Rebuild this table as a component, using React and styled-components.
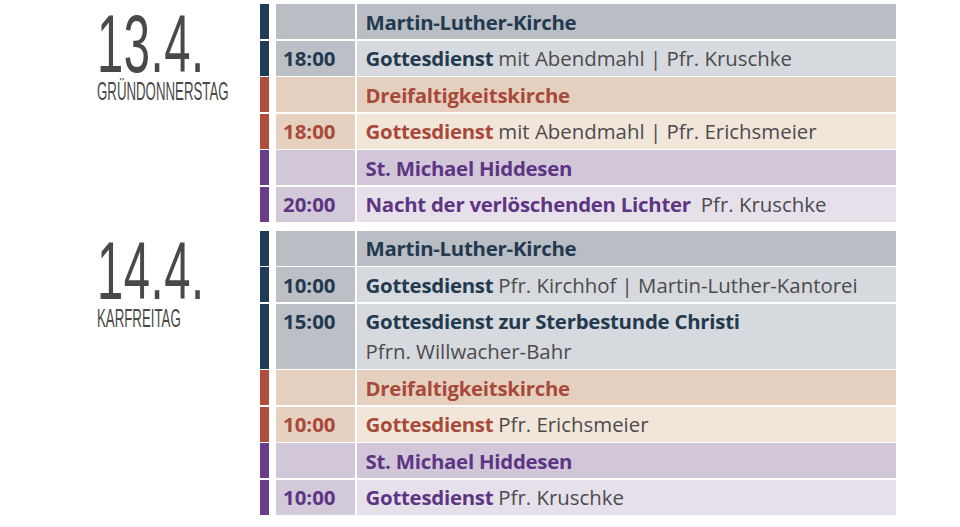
import React from "react";
import styled, { createGlobalStyle } from "styled-components";

const GlobalStyle = createGlobalStyle`
  html, body { margin: 0; padding: 0; background: #ffffff; }
  body { font-family: "Open Sans", "Lato", sans-serif; }
`;

const themes = {
  navy: { bar: "#1f3b56", text: "#22394f", head: "#b9bdc4", time: "#bcc0c6", body: "#d6d9dd" },
  red: { bar: "#ae4e3b", text: "#a8493a", head: "#e5d0c0", time: "#e6d0bf", body: "#f2e6db" },
  purple: { bar: "#6a3d89", text: "#5e3583", head: "#d1c7d9", time: "#d2c9d9", body: "#e6e0ea" },
};

const days = [
  {
    date: "13.4.",
    label: "GRÜNDONNERSTAG",
    groups: [
      { church: "Martin-Luther-Kirche", theme: "navy", events: [{ time: "18:00", title: "Gottesdienst", rest: "mit Abendmahl | Pfr. Kruschke" }] },
      { church: "Dreifaltigkeitskirche", theme: "red", events: [{ time: "18:00", title: "Gottesdienst", rest: "mit Abendmahl | Pfr. Erichsmeier" }] },
      { church: "St. Michael Hiddesen", theme: "purple", events: [{ time: "20:00", title: "Nacht der verlöschenden Lichter", rest: "Pfr. Kruschke", wide: true }] },
    ],
  },
  {
    date: "14.4.",
    label: "KARFREITAG",
    groups: [
      {
        church: "Martin-Luther-Kirche",
        theme: "navy",
        events: [
          { time: "10:00", title: "Gottesdienst", rest: "Pfr. Kirchhof | Martin-Luther-Kantorei" },
          { time: "15:00", title: "Gottesdienst zur Sterbestunde Christi", second: "Pfrn. Willwacher-Bahr" },
        ],
      },
      { church: "Dreifaltigkeitskirche", theme: "red", events: [{ time: "10:00", title: "Gottesdienst", rest: "Pfr. Erichsmeier" }] },
      { church: "St. Michael Hiddesen", theme: "purple", events: [{ time: "10:00", title: "Gottesdienst", rest: "Pfr. Kruschke" }] },
    ],
  },
];

const Page = styled.div`
  width: 960px;
  padding-top: 4px;
  display: flex;
  flex-direction: column;
  gap: 9px;
`;

const DayBlock = styled.section`
  display: flex;
  align-items: flex-start;
`;

const DateCol = styled.div`
  width: 163px;
  padding-left: 97px;
  padding-top: 4px;
  box-sizing: content-box;
  color: #4a4849;
  font-family: "Liberation Sans", Arial, sans-serif;
`;

const DateNum = styled.div`
  width: max-content;
  font-size: 82px;
  line-height: 72px;
  letter-spacing: 1px;
  transform: scaleX(0.575);
  transform-origin: left top;
  white-space: nowrap;
`;

const DayLabel = styled.div`
  width: max-content;
  font-size: 26px;
  line-height: 20px;
  margin-top: 1px;
  transform: scaleX(0.51);
  transform-origin: left top;
  white-space: nowrap;
`;

const Table = styled.div`
  width: 636px;
  display: flex;
  flex-direction: column;
  gap: 1.5px;
`;

const Row = styled.div`
  display: flex;
  min-height: 35px;
`;

const Bar = styled.div`
  width: 9px;
  margin-right: 7px;
  background: ${(p) => p.$c};
`;

const TimeCell = styled.div`
  width: 79px;
  box-sizing: border-box;
  padding: 2.5px 0 2.5px 7px;
  background: ${(p) => p.$bg};
  color: ${(p) => p.$c};
  font-weight: 700;
  font-size: 20.4px;
  line-height: 30px;
`;

const TextCell = styled.div`
  flex: 1;
  margin-left: 1.5px;
  padding: 2.5px 0 2.5px 9px;
  background: ${(p) => p.$bg};
  color: #4b4b4d;
  font-size: 20.4px;
  line-height: 30px;
`;

const Strong = styled.span`
  font-weight: 700;
  letter-spacing: -0.25px;
  color: ${(p) => p.$c};
  margin-right: ${(p) => (p.$wide ? "10px" : "5px")};
`;

function Group({ g }) {
  const t = themes[g.theme];
  return (
    <>
      <Row>
        <Bar $c={t.bar} />
        <TimeCell $bg={t.head} $c={t.text} />
        <TextCell $bg={t.head}>
          <Strong $c={t.text}>{g.church}</Strong>
        </TextCell>
      </Row>
      {g.events.map((e, i) => (
        <Row key={i}>
          <Bar $c={t.bar} />
          <TimeCell $bg={t.time} $c={t.text}>{e.time}</TimeCell>
          <TextCell $bg={t.body}>
            <Strong $c={t.text} $wide={e.wide}>{e.title}</Strong>
            {e.rest}
            {e.second && <div>{e.second}</div>}
          </TextCell>
        </Row>
      ))}
    </>
  );
}

export default function App() {
  return (
    <>
      <GlobalStyle />
      <Page>
        {days.map((d) => (
          <DayBlock key={d.date}>
            <DateCol>
              <DateNum>{d.date}</DateNum>
              <DayLabel>{d.label}</DayLabel>
            </DateCol>
            <Table>
              {d.groups.map((g, i) => (
                <Group key={i} g={g} />
              ))}
            </Table>
          </DayBlock>
        ))}
      </Page>
    </>
  );
}
